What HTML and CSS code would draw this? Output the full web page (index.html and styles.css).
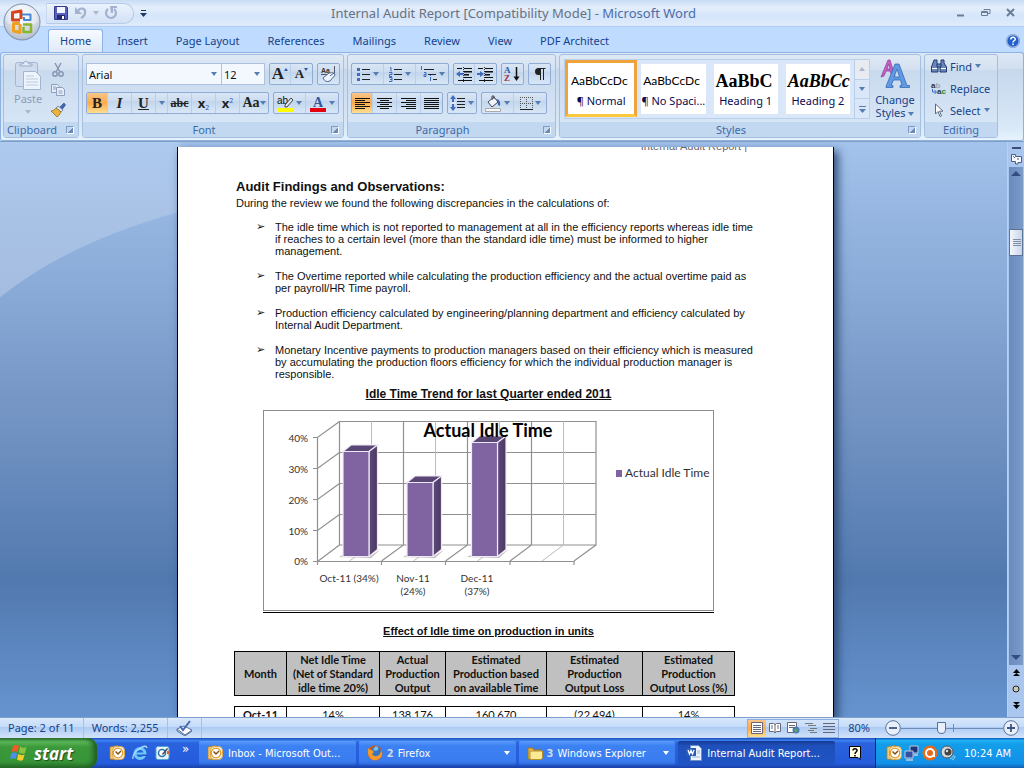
FILE: index.html
```html
<!DOCTYPE html>
<html lang="en">
<head>
<meta charset="utf-8">
<title>Internal Audit Report - Microsoft Word</title>
<link rel="stylesheet" href="styles.css">
</head>
<body>
<header class="titlebar">
  <button class="office" aria-label="Office Button">
    <svg width="38" height="38" viewBox="0 0 38 38"><defs><radialGradient id="orb" cx=".5" cy=".3" r=".75"><stop offset="0" stop-color="#fff"/><stop offset=".55" stop-color="#e3e8f0"/><stop offset="1" stop-color="#9aa7bd"/></radialGradient></defs>
    <circle cx="19" cy="19" r="18" fill="url(#orb)" stroke="#7b8fae"/><path d="M3 20a16 16 0 0 0 32 0q-16 5-32 0z" fill="#c5cddb" opacity=".5"/>
    <g fill="none" stroke-linejoin="round"><path d="M17 17H9.500V9.500L18 8v8" stroke="#d8431c" stroke-width="3"/><path d="M20 12.500v-1h7.500V17H21v-3" stroke="#4a8ad4" stroke-width="2"/><path d="M17 20.500h-6.500V28l6.500 1.500V21" stroke="#f0a01e" stroke-width="3"/><path d="M20 21.500h8V29h-7.500v-5" stroke="#8ab52f" stroke-width="2.500"/></g></svg>
  </button>
  <div class="quick">
    <button aria-label="Save"><svg width="16" height="16" viewBox="0 0 16 16"><path d="M1.500 1.500h12l1 1v12h-13z" fill="#5a5fc0" stroke="#34388c"/><path d="M4 2h8v6H4z" fill="#f2f6ff"/><path d="M4 10h8v4H4z" fill="#222a70"/><path d="M9 11h2v3H9z" fill="#fff"/></svg></button>
    <button aria-label="Undo"><svg width="14" height="16" viewBox="0 0 14 16"><path d="M1 2v7h7z" fill="#a3b3cf"/><path d="M4 6c2-4 8-3 7 2 0 2-2 4-4 5" fill="none" stroke="#a3b3cf" stroke-width="2.200"/></svg></button>
    <i class="caret pale"></i>
    <button aria-label="Redo"><svg width="14" height="16" viewBox="0 0 14 16"><path d="M4 4a5 5 0 1 0 6 0" fill="none" stroke="#a3b3cf" stroke-width="2.200"/><path d="M6 1h7v2H9v5H7z" fill="#a3b3cf"/></svg></button>
  </div>
  <button class="customize" aria-label="Customize Quick Access Toolbar"><svg width="7" height="8"><path d="M1 1.500h5" stroke="#234"/><path d="M0 4h7l-3.500 4z" fill="#1f3860"/></svg></button>
  <h1 class="caption">Internal Audit Report [Compatibility Mode] - <span>Microsoft Word</span></h1>
  <div class="window-buttons">
    <button aria-label="Minimize"><svg width="10" height="10"><path d="M1 7.500h7" stroke="#6a7c96" stroke-width="2"/></svg></button>
    <button aria-label="Restore"><svg width="10" height="10" fill="none" stroke="#6a7c96"><path d="M3 2.500V1.500h6v4h-2"/><path d="M.5 3.500h6v4h-6zM.5 4.500h6"/></svg></button>
    <button aria-label="Close"><svg width="10" height="10"><path d="M1 1l7 7M8 1L1 8" stroke="#6a7c96" stroke-width="2"/></svg></button>
  </div>
</header>
<nav class="tabs">
  <button class="tab active">Home</button><button class="tab">Insert</button><button class="tab">Page Layout</button><button class="tab">References</button><button class="tab">Mailings</button><button class="tab">Review</button><button class="tab">View</button><button class="tab">PDF Architect</button>
  <button class="help" aria-label="Help"><svg width="14" height="14" viewBox="0 0 14 14"><circle cx="7" cy="7" r="6.300" fill="#2460cc" stroke="#e8f0fc"/><circle cx="7" cy="7" r="6.700" fill="none" stroke="#5a7dba" stroke-width=".6"/><path d="M4.800 5.500c0-3 4.500-2.800 4.500-.3C9.300 6.800 7 6.600 7 8.500" fill="none" stroke="#fff" stroke-width="1.500"/><path d="M6.200 9.600h1.600v1.500H6.200z" fill="#fff"/></svg></button>
</nav>
<section class="ribbon" aria-label="Ribbon">
  <section class="group clipboard">
    <div class="body">
      <button class="paste"><svg width="28" height="32" viewBox="0 0 28 32"><rect x="1.500" y="3.500" width="22" height="24" rx="2" fill="#cfdcef" stroke="#a4b5cf"/><path d="M6 5h3q3-6 6 0h3v2H6z" fill="#dfe8f5" stroke="#9bacc6"/><path d="M9.500 12.500h12l5 5v13h-17z" fill="#eef4fc" stroke="#a4b5cf"/><path d="M12 17h8M12 20h12M12 23h12M12 26h12" stroke="#bccbe0"/></svg><span>Paste</span><i class="caret pale"></i></button>
      <div class="stack">
        <button aria-label="Cut"><svg width="14" height="16" viewBox="0 0 14 16" fill="none" stroke="#8797b1" stroke-width="1.500"><path d="M4 1l5 9M10 1L5 10"/><circle cx="4" cy="12" r="2.200"/><circle cx="10" cy="12" r="2.200"/></svg></button>
        <button aria-label="Copy"><svg width="16" height="14" viewBox="0 0 16 14" fill="#e6eef9" stroke="#8d9fbd"><path d="M1.500 1.500h6l2 2v6h-8z"/><path d="M6.500 4.500h6l2 2v6h-8z"/><path d="M3 4h3M3 6h3M8.500 8h4M8.500 10h4"/></svg></button>
        <button aria-label="Format Painter"><svg width="16" height="16" viewBox="0 0 16 16"><path d="M10 5l4-4 1.500 2-3 4z" fill="#4166b8" stroke="#2a4687" stroke-width=".6"/><path d="M8 4l5 4-2 2-5-4z" fill="#dbe2ef" stroke="#5d6c8b" stroke-width=".7"/><path d="M6 6l5 4q-2 4-4 5L1 9q3 0 5-3z" fill="#e9b43c" stroke="#8e671d" stroke-width=".7"/></svg></button>
      </div>
    </div>
    <h2>Clipboard<i class="launcher"></i></h2>
  </section>
  <section class="group font">
    <div class="body rows">
      <div class="row">
        <div class="combos"><label class="combo family"><select aria-label="Font"><option>Arial</option></select></label><label class="combo size"><select aria-label="Font Size"><option>12</option></select></label></div>
        <div class="set"><button class="b22 serif big" aria-label="Grow Font">A<sup class="up"></sup></button><button class="b22 serif small" aria-label="Shrink Font">A<sup class="down"></sup></button></div>
        <div class="set"><button class="b22" aria-label="Clear Formatting"><svg width="17" height="17" viewBox="0 0 17 17"><text x="1" y="7" class="tiny">Aa</text><path d="M14.500 0v9M1 8.500h6" stroke="#556"/><path d="M3 12l6-5q6-1 6 2l-5 6q-5 2-7-3z" fill="#eef4fd" stroke="#54698e"/><path d="M10 10l4-3" stroke="#54698e"/></svg></button></div>
      </div>
      <div class="row">
        <div class="set"><button class="b22 serif on"><b>B</b></button><button class="b24 serif"><i>I</i></button><button class="b24 serif"><u>U</u></button><button class="b12" aria-label="Underline style"><i class="caret"></i></button><button class="b24 serif strike"><s>abc</s></button><button class="b24 script"><b>x</b><sub>2</sub></button><button class="b24 script"><b>x</b><sup>2</sup></button><button class="b28 serif case">Aa<i class="caret"></i></button></div>
        <div class="set"><button class="b32" aria-label="Text Highlight Color"><svg width="17" height="17" viewBox="0 0 17 17"><path d="M0 13h16v4H0z" fill="#ff0"/><text x="0" y="9" class="ab">ab</text><path d="M16 5l-6 7H8v-2l6-7z" fill="#dfe8f5" stroke="#444"/></svg><i class="caret"></i></button><button class="b32" aria-label="Font Color"><svg width="17" height="17" viewBox="0 0 17 17"><text x="3" y="12" class="fc">A</text><path d="M0 13h16v4H0z" fill="#e3000f"/></svg><i class="caret"></i></button></div>
      </div>
    </div>
    <h2>Font<i class="launcher"></i></h2>
  </section>
  <section class="group paragraph">
    <div class="body rows">
      <div class="row">
        <div class="set"><button class="b32" aria-label="Bullets"><svg width="15" height="15" viewBox="0 0 15 15"><path d="M6 2.500h8M6 7.500h8M6 12.500h8" stroke="#222" /><path d="M1 1h3v3H1zM1 6h3v3H1zM1 11h3v3H1z" fill="#416bbd"/></svg><i class="caret"></i></button><button class="b32" aria-label="Numbering"><svg width="15" height="15" viewBox="0 0 15 15"><path d="M6 2.500h8M6 7.500h8M6 12.500h8" stroke="#222"/><path d="M2 .5h1v4M1 5.500h3v2H1.500v2H4M1 10.500h3v4H1M2 12.500h2" fill="none" stroke="#416bbd"/></svg><i class="caret"></i></button><button class="b32" aria-label="Multilevel List"><svg width="17" height="16" viewBox="0 0 17 16"><path d="M4 3.500h10M8 8.500h8M13 13.500h4" stroke="#222"/><path d="M1.500 0v4M4 6.500h2v4H4v-2h2M10.500 11v4M10.500 9v1" fill="none" stroke="#416bbd"/></svg><i class="caret"></i></button></div>
        <div class="set"><button class="b22" aria-label="Decrease Indent"><svg width="17" height="15" viewBox="0 0 17 15"><path d="M1 1.500h5M8 1.500h8M8 4.500h8M8 7.500h5M8 10.500h8M2 13.500h14" stroke="#111"/><path d="M8 4h8v1.500H8zM8 7h5v1.500H8z" fill="#111"/><path d="M0 7l4-3v2h3v2H4v2z" fill="#416bbd"/><path d="M7.500 0v15" stroke="#333" stroke-dasharray="1 1"/></svg></button><button class="b22" aria-label="Increase Indent"><svg width="17" height="15" viewBox="0 0 17 15"><path d="M1 1.500h5M8 1.500h8M8 4.500h8M8 7.500h5M8 10.500h8M2 13.500h14" stroke="#111"/><path d="M8 4h8v1.500H8zM8 7h5v1.500H8z" fill="#111"/><path d="M7 7L3 4v2H0v2h3v2z" fill="#416bbd"/><path d="M7.500 0v15" stroke="#333" stroke-dasharray="1 1"/></svg></button></div>
        <div class="set"><button class="b22" aria-label="Sort"><svg width="17" height="18" viewBox="0 0 17 18"><text x="0" y="8" class="sort">A</text><text x="0" y="16" class="sort z">Z</text><path d="M12.500 2v12" stroke="#111" stroke-width="1.500"/><path d="M9.500 11.500h6L12.500 16z" fill="#111"/></svg></button></div>
        <div class="set"><button class="b22" aria-label="Show paragraph marks"><svg width="12" height="14" viewBox="0 0 12 14"><path d="M6 1H4.500a3.500 3.500 0 0 0 0 7H6z" fill="#222"/><path d="M6.500 1v12M9.500 1v12M4 1.500h7.500" stroke="#222"/></svg></button></div>
      </div>
      <div class="row">
        <div class="set"><button class="b22 on" aria-label="Align Left"><svg width="15" height="13" stroke="#111"><path d="M0 1.500h15M0 3.500h10M0 5.500h15M0 7.500h10M0 9.500h15M0 11.500h10"/></svg></button><button class="b24" aria-label="Center"><svg width="15" height="13" stroke="#111"><path d="M0 1.500h15M3 3.500h9M0 5.500h15M3 7.500h9M0 9.500h15M3 11.500h9"/></svg></button><button class="b24" aria-label="Align Right"><svg width="15" height="13" stroke="#111"><path d="M0 1.500h15M5 3.500h10M0 5.500h15M5 7.500h10M0 9.500h15M5 11.500h10"/></svg></button><button class="b22" aria-label="Justify"><svg width="15" height="13" stroke="#111"><path d="M0 1.500h15M0 3.500h15M0 5.500h15M0 7.500h15M0 9.500h15M0 11.500h15"/></svg></button></div>
        <div class="set"><button class="b28" aria-label="Line Spacing"><svg width="16" height="16" viewBox="0 0 16 16"><path d="M7 3.500h8M7 6.500h8M7 9.500h8M7 12.500h8" stroke="#222"/><path d="M3 0l3 4H4v8h2l-3 4-3-4h2V4H0z" fill="#416bbd"/><path d="M0 7h6v2H0z" fill="#dce9f9"/></svg><i class="caret"></i></button></div>
        <div class="set"><button class="b32" aria-label="Shading"><svg width="17" height="17" viewBox="0 0 17 17"><path d="M3 7l6-5 4 5-6 5z" fill="#f2f6fc" stroke="#445"/><path d="M7 5V1h2v3" fill="none" stroke="#445"/><path d="M11 4q5 0 4 7-3-1-2-4z" fill="#3d63af"/><path d="M.5 13.500h15v3H.5z" fill="#f5f8fd" stroke="#aaa"/></svg><i class="caret"></i></button><button class="b32" aria-label="Borders"><svg width="13" height="13" viewBox="0 0 13 13"><path d="M.5 0v12M6.500 0v12M12.500 0v12M0 .5h12M0 6.500h12" stroke="#555" stroke-dasharray="1 1"/><path d="M0 12.500h13" stroke="#222"/></svg><i class="caret"></i></button></div>
      </div>
    </div>
    <h2>Paragraph<i class="launcher"></i></h2>
  </section>
  <section class="group styles">
    <div class="body">
      <div class="gallery">
        <button class="style chosen"><span class="sample sans">AaBbCcDc</span><span>¶ Normal</span></button>
        <button class="style"><span class="sample sans">AaBbCcDc</span><span>¶ No Spaci...</span></button>
        <button class="style"><span class="sample head">AaBbC</span><span>Heading 1</span></button>
        <button class="style"><span class="sample head slanted">AaBbCc</span><span>Heading 2</span></button>
        <div class="spin"><button class="dim" aria-label="Up"><i class="caret flip pale"></i></button><button aria-label="Down"><i class="caret"></i></button><button aria-label="More"><svg width="7" height="8"><path d="M0 1.500h7" stroke="#567db1"/><path d="M0 4h7L3.500 8z" fill="#567db1"/></svg></button></div>
      </div>
      <button class="change"><svg width="30" height="30" viewBox="0 0 30 30"><path d="M1 18L8 1h2l5 16h-3l-2-5H6l-2 5zM7 10h3L8.500 5z" fill="#c45fc6" stroke="#8c3b93" stroke-width=".7"/><path d="M6 27.500L15 5h4l8 21.500h2.500v2H20v-2h2L20.500 21h-7L11 26.500h2v2H6zM14 18h5.500L17 10z" fill="#5f9ae6" stroke="#315fa9" stroke-width=".7"/></svg><span>Change</span><span>Styles <i class="caret"></i></span></button>
    </div>
    <h2>Styles<i class="launcher"></i></h2>
  </section>
  <section class="group editing">
    <div class="body">
      <button><svg width="16" height="14" viewBox="0 0 16 14" fill="#6a87bd" stroke="#223a6e"><path d="M3 1h3v3l1 2v7H.500V8z"/><path d="M10 1h3v3l2.500 4v5H9V6l1-2z"/><path d="M6 5h4v3H6z"/><path d="M1 9.500h5M10 9.500h5" stroke="#fff"/></svg>Find <i class="caret"></i></button>
      <button><svg width="16" height="14" viewBox="0 0 16 14"><text x="0" y="7" class="rep">a<tspan fill="#9aa6b8">b</tspan></text><text x="6" y="13" class="rep">a<tspan fill="#168a23">c</tspan></text><path d="M1.500 8v3H5M3.500 9l2 2-2 2" fill="none" stroke="#416bbd"/></svg>Replace</button>
      <button><svg width="16" height="14" viewBox="0 0 16 14"><path d="M4.500 1v10l2.500-2.500 2 5 1.500-.8-2-4.500H12z" fill="#fff" stroke="#5b6c88"/></svg>Select <i class="caret"></i></button>
    </div>
    <h2>Editing</h2>
  </section>
</section>
<main class="workspace">
  <div class="canvas">
    <svg class="swoosh" viewBox="0 0 180 578" preserveAspectRatio="none" aria-hidden="true"><defs><linearGradient id="sw" x1="0" y1="0" x2="0" y2="1"><stop offset="0" stop-color="#fff" stop-opacity=".12"/><stop offset="1" stop-color="#fff" stop-opacity=".24"/></linearGradient></defs><path d="M0 0H180V70Q70 100 0 156z" fill="url(#sw)"/></svg>
    <article class="page">
      <div class="running">Internal Audit Report&nbsp;|</div>
      <h2 class="lead">Audit Findings and Observations:</h2>
      <p>During the review we found the following discrepancies in the calculations of:</p>
      <ul class="findings">
        <li>The idle time which is not reported to management at all in the efficiency reports whereas idle time<br>if reaches to a certain level (more than the standard idle time) must be informed to higher<br>management.</li>
        <li>The Overtime reported while calculating the production efficiency and the actual overtime paid as<br>per payroll/HR Time payroll.</li>
        <li>Production efficiency calculated by engineering/planning department and efficiency calculated by<br>Internal Audit Department.</li>
        <li>Monetary Incentive payments to production managers based on their efficiency which is measured<br>by accumulating the production floors efficiency for which the individual production manager is<br>responsible.</li>
      </ul>
      <h3 class="trend">Idle Time Trend for last Quarter ended 2011</h3>
      <figure class="chart">
        <svg viewBox="263 410 451 201" role="img" aria-label="Actual Idle Time by month">
          <defs><linearGradient id="side" x1="0" x2="1"><stop offset="0" stop-color="#5f4a7c"/><stop offset="1" stop-color="#4a3861"/></linearGradient></defs>
          <rect x="263.500" y="410.500" width="450" height="200" fill="#fff" stroke="#8c8c8c"/>
          <g fill="none" stroke="#909090" stroke-width="1.200">
            <path d="M339.500 545V421.500H596V545H339.500M339.500 452.500H596M339.500 483.500H596M339.500 514.500H596M403.500 421V545L381.500 561M467.500 421V545L445.500 561M531.500 421V545L510 561M596 545L574 561"/>
            <path d="M371.500 421V545L349.500 561M435.500 421V545L413.500 561M499.500 421V545L477.500 561M563.500 421V545L542 561" stroke="#bcbcbc" stroke-width="1"/>
            <path d="M317.500 437V565M313 437.500H317.500L339.500 421.500M313 468.500H317.500L339.500 452.500M313 499.500H317.500L339.500 483.500M313 530.500H317.500L339.500 514.500M313 561.500H574M317.500 561.500L339.500 545M381.500 561V565M445.500 561V565M510 561V565M574 561V565"/>
          </g>
          <g fill="#999" opacity=".6"><path d="M339 557l4-2 26 2 12-8-10 9z"/><path d="M403 557l4-2 26 2 12-8-10 9z"/><path d="M467 557l4-2 26 2 12-8-10 9z"/></g>
          <g stroke="#eee9f4" stroke-width="1.200" stroke-linejoin="round">
            <path d="M343 451.500l8-6.500h27l-9 6.500z" fill="#5b4776"/><path d="M369 451.500l8.500-6.500V549.500l-8.500 7z" fill="url(#side)"/><path d="M343 451.500h26v105h-26z" fill="#8064a2"/>
            <path d="M407 482.500l8-6.500h27l-9 6.500z" fill="#5b4776"/><path d="M433 482.500l8.500-6.500V549.500l-8.500 7z" fill="url(#side)"/><path d="M407 482.500h26v74h-26z" fill="#8064a2"/>
            <path d="M471.500 442.500l8-6.500h27l-9 6.500z" fill="#5b4776"/><path d="M497.500 442.500l8.500-6.500V549.500l-8.500 7z" fill="url(#side)"/><path d="M471.500 442.500h26v114h-26z" fill="#8064a2"/>
          </g>
          <text x="488" y="437" class="ctitle">Actual Idle Time</text>
          <g class="ylab"><text x="308" y="442">40%</text><text x="308" y="473">30%</text><text x="308" y="504">20%</text><text x="308" y="535">10%</text><text x="308" y="565">0%</text></g>
          <g class="xlab"><text x="349" y="582">Oct-11 (34%)</text><text x="413" y="582">Nov-11</text><text x="413" y="595">(24%)</text><text x="477" y="582">Dec-11</text><text x="477" y="595">(37%)</text></g>
          <rect x="616" y="470" width="6" height="7" fill="#8064a2"/><text x="625" y="477" class="leg">Actual Idle Time</text>
        </svg>
      </figure>
      <h3 class="effect">Effect of Idle time on production in units</h3>
      <table>
        <colgroup><col class="c1"><col class="c2"><col class="c3"><col class="c4"><col class="c5"><col class="c6"></colgroup>
        <thead><tr><th>Month</th><th>Net Idle Time<br>(Net of Standard<br>idle time 20%)</th><th>Actual<br>Production<br>Output</th><th>Estimated<br>Production based<br>on available Time</th><th>Estimated<br>Production<br>Output Loss</th><th>Estimated<br>Production<br>Output Loss (%)</th></tr></thead>
        <tbody><tr class="spacer"><td colspan="6"></td></tr><tr><th>Oct-11</th><td>14%</td><td>138,176</td><td>160,670</td><td>(22,494)</td><td>14%</td></tr></tbody>
      </table>
    </article>
  </div>
  <aside class="scroll" aria-label="Vertical scroll bar">
    <i class="split"></i>
    <button aria-label="View Ruler"><svg width="13" height="12" viewBox="0 0 13 12" fill="#f6f9fe" stroke="#4f5f7f"><path d="M1.500 1.500h4v2h6v6H8v1.500H5.500V8.500h-4z"/><path d="M3 3l2 2M8 5v2" /></svg></button>
    <div class="track"><button aria-label="Scroll up"><i class="arrow up"></i></button><span class="thumb"></span><button class="last" aria-label="Scroll down"><i class="arrow"></i></button></div>
    <button class="nav" aria-label="Previous Page"><svg width="7" height="8"><path d="M0 4l3.500-4L7 4zM0 7l3.500-3L7 7z"/></svg></button>
    <button class="nav" aria-label="Browse Object"><svg width="8" height="8"><circle cx="4" cy="4" r="3" fill="#c9cbb8" stroke="#222"/></svg></button>
    <button class="nav" aria-label="Next Page"><svg width="7" height="8"><path d="M0 1l3.500 3L7 1zM0 4l3.500 4L7 4z"/></svg></button>
  </aside>
</main>
<footer class="status">
  <span class="cell">Page: 2 of 11</span><span class="cell">Words: 2,255</span>
  <span class="cell"><svg width="17" height="16" viewBox="0 0 17 16"><path d="M1 9l7-3 8 4-7 5z" fill="#fff" stroke="#57709f"/><path d="M1 9v2l8 5 7-5" fill="none" stroke="#57709f"/><path d="M4 6l3 4 7-9" fill="none" stroke="#456bb5" stroke-width="2"/></svg></span>
  <div class="views"><button class="on" aria-label="Print Layout"><svg width="12" height="12"><path d="M.5.5h11v11H.5z" fill="#fff" stroke="#667"/><path d="M2 3.500h8M2 5.500h8M2 7.500h8M2 9.500h8" stroke="#667"/></svg></button><button aria-label="Full Screen Reading"><svg width="12" height="12" fill="#fff" stroke="#667"><path d="M.5 1.500h4l1.500 1 1.500-1h4v8h-4L6 11 4.500 9.500h-4zM6 2v9M2 4h2M2 6h2M8 4h2M8 6h2"/></svg></button><button aria-label="Web Layout"><svg width="13" height="12"><path d="M.5.5h9v10h-9z" fill="#fff" stroke="#667"/><path d="M2 3.500h6M2 5.500h6" stroke="#667"/><circle cx="9" cy="8" r="3.500" fill="#4b79b8"/><path d="M7 8q2-3 4 0-2 2-2 3z" fill="#59a75d"/></svg></button><button aria-label="Outline"><svg width="12" height="12" stroke="#777"><path d="M0 1.500h8M3 3.500h8M5 6.500h7M3 8.500h6M5 10.500h7"/></svg></button><button aria-label="Draft"><svg width="12" height="12" stroke="#667"><path d="M0 1.500h12M0 4.500h12M0 7.500h12M0 10.500h12"/></svg></button></div>
  <button class="percent">80%</button>
  <button aria-label="Zoom Out"><svg width="16" height="16" viewBox="0 0 16 16"><circle cx="8" cy="8" r="7.300" fill="#e8effa" stroke="#59739d"/><path d="M4 8h8" stroke="#3d5680" stroke-width="1.800"/></svg></button>
  <input class="zoom" type="range" min="0" max="100" value="39" aria-label="Zoom">
  <button aria-label="Zoom In"><svg width="16" height="16" viewBox="0 0 16 16"><circle cx="8" cy="8" r="7.300" fill="#e8effa" stroke="#59739d"/><path d="M4 8h8M8 4v8" stroke="#3d5680" stroke-width="1.800"/></svg></button>
</footer>
<svg class="defs" width="0" height="0" aria-hidden="true"><symbol id="outlook" viewBox="0 0 16 16"><path d="M1 2l8-1.500V15L1 14z" fill="#f3c66f" stroke="#b47a21" stroke-width=".7"/><rect x="3.500" y="1.500" width="12" height="13" rx="4" fill="#fbf3dc" stroke="#d9a84b"/><circle cx="9" cy="8" r="4.800" fill="#fff" stroke="#e09a2b" stroke-width="1.300"/><path d="M6.500 6.500L9 9l3-3" fill="none" stroke="#80500f" stroke-width="1.500"/></symbol></svg>
<footer class="taskbar">
  <button class="start"><svg width="18" height="18" viewBox="0 0 18 18"><path d="M3 2q3-2 6 0L7.500 8q-3-1.500-6 0z" fill="#ef5b2a"/><path d="M10 2.500q3 2 6.500.5L15 9q-3 1.500-6.200-.5z" fill="#86c440"/><path d="M1.200 9.500q3-2 6 0L5.700 15q-3-1.500-5.700 0z" fill="#4a8ff0"/><path d="M8.300 10q3 2 6.300.5L13 16q-3 1.500-6-.5z" fill="#f8c92c"/></svg>start</button>
  <div class="launch">
    <button aria-label="Outlook"><svg width="16" height="16"><use href="#outlook"/></svg></button>
    <button aria-label="Internet Explorer"><svg width="16" height="16" viewBox="0 0 16 16"><circle cx="8" cy="8.500" r="5" fill="none" stroke="#6fc8f7" stroke-width="3"/><path d="M4 8.500h9" stroke="#6fc8f7" stroke-width="2"/><path d="M10 11h5v-1.500h-4z" fill="#1f55c8"/><path d="M1 14Q0 9 7 4t8-1" fill="none" stroke="#a7defb" stroke-width="1.300"/></svg></button>
    <button aria-label="Show Desktop"><svg width="16" height="16" viewBox="0 0 16 16"><rect x="1" y="1.500" width="13" height="13" rx="2" fill="#e7f3fb" stroke="#5aa5d0"/><circle cx="7" cy="8" r="3.500" fill="#fff" stroke="#34789f" stroke-width="1.500"/><path d="M7 9l5-6 1 1-5 6z" fill="#345"/><path d="M12 6h3v3h-3z" fill="#e85b22"/></svg></button>
    <span class="more">»</span>
  </div>
  <div class="tasks">
    <button><svg width="16" height="16"><use href="#outlook"/></svg><span>Inbox - Microsoft Out...</span></button>
    <button class="many"><svg width="16" height="16" viewBox="0 0 16 16"><circle cx="8" cy="8" r="7.500" fill="#d9560f"/><circle cx="9" cy="6.500" r="5" fill="#3576be"/><path d="M9 1q3 1 2 4l-3 1-2-2z" fill="#7cc0ea"/><path d="M1 3q1 2 4 2l2 2-2 2q2 3 5 2 4-1 4-6 3 6-2 9-5 3-9-1-3-4-2-8z" fill="#f29a2e"/></svg><b>2</b><span>Firefox</span><i class="caret"></i></button>
    <button class="many"><svg width="16" height="16" viewBox="0 0 16 16"><path d="M1 3h5l1 2h7v9H1z" fill="#e3b64c" stroke="#9b7722"/><path d="M3 6h12.500v7l-1.500 1.500H3z" fill="#fbe994" stroke="#b6912f"/></svg><b>3</b><span>Windows Explorer</span><i class="caret"></i></button>
    <button class="current"><svg width="16" height="16" viewBox="0 0 16 16"><path d="M4.500.5h8l3 3v12h-11z" fill="#eef4ff" stroke="#6d8cc6"/><path d="M11 6h3M11 8h3M6 12h8" stroke="#9cb4dd"/><rect x="0" y="3" width="10" height="8" fill="#2b5bb5"/><path d="M2 5l1.500 4L5 5.500 6.500 9 8 5" fill="none" stroke="#fff" stroke-width="1.300"/></svg><span>Internal Audit Report...</span></button>
  </div>
  <button class="hint" aria-label="Language help"><svg width="12" height="14" viewBox="0 0 12 14"><path d="M.5.500h11v11H11v2L9 11.500H.500z" fill="#ffffe1" stroke="#000"/><path d="M4 4.500c0-2.500 4-2.500 4 0C8 6 6 6 6 8" fill="none" stroke="#000" stroke-width="1.500"/><path d="M5.200 9h1.600v1.500H5.200z"/></svg></button>
  <div class="tray">
    <svg width="16" height="16"><use href="#outlook"/></svg>
    <svg width="16" height="16" viewBox="0 0 16 16"><path d="M6 1h8v7H6z" fill="#20347c" stroke="#c0cbe0"/><path d="M1 6h8v7H1z" fill="#3350a5" stroke="#c0cbe0"/><path d="M2 15h7M10 10h4" stroke="#c0cbe0" stroke-width="1.500"/></svg>
    <svg width="16" height="16" viewBox="0 0 16 16"><circle cx="8" cy="8" r="7.500" fill="#e56a19"/><circle cx="8" cy="8" r="4" fill="none" stroke="#fff" stroke-width="2"/><path d="M12 6v6" stroke="#fff" stroke-width="2"/></svg>
    <svg width="16" height="16" viewBox="0 0 16 16"><circle cx="7" cy="7" r="6" fill="#d4d8dc" stroke="#555"/><circle cx="8" cy="7" r="3.500" fill="#444"/><circle cx="7" cy="6" r="1.200" fill="#ddd"/><path d="M10 14q3-1 4-4M12 15q3-1 3-4" fill="none" stroke="#8ed5f7"/></svg>
    <time>10:24 AM</time>
  </div>
</footer>
</body>
</html>
```
FILE: styles.css
```css
* { box-sizing: border-box; }
body { margin: 0; height: 100vh; display: flex; flex-direction: column; overflow: hidden; background: #bfdbff; font-family: "Noto Sans", "Open Sans", sans-serif; font-size: 11px; color: #15428b; }
button { border: 0; margin: 0; padding: 0; background: none; font: inherit; color: inherit; display: flex; align-items: center; justify-content: center; flex: none; white-space: nowrap; }
svg { display: block; flex: none; }
h1, h2, h3, p, ul, figure { margin: 0; padding: 0; font-weight: normal; }
.defs { position: absolute; }

.caret { flex: none; display: inline-block; vertical-align: middle; border: 3px solid transparent; border-top: 4px solid #567db1; border-bottom: 0; }
.caret.pale { border-top-color: #a9b8cf; }
.caret.flip { transform: rotate(180deg); }

/* title bar */
.titlebar { flex: none; height: 27px; display: flex; align-items: center; position: relative; padding: 0 8px 0 46px; background: linear-gradient(#c9dcf5, #e4eefb 30%, #d5e5fa 60%, #dfebfb); border-bottom: 1px solid #b0cdf3; }
.office { position: absolute; left: 3px; top: 3px; z-index: 2; }
.quick { display: flex; align-items: center; gap: 5px; height: 21px; width: 88px; padding-left: 6px; border: 1px solid #b6cbe8; border-left-color: #c8d9f0; border-radius: 0 10px 10px 0; background: linear-gradient(#eaf2fd, #d3e2f6); }
.customize { margin-left: 6px; }
.caption { flex: 1; text-align: center; font-size: 13px; line-height: 27px; color: #69727f; padding-right: 76px; white-space: nowrap; }
.caption span { color: #4e6ca8; }
.window-buttons { display: flex; gap: 15px; }

/* tabs */
.tabs { flex: none; height: 25px; display: flex; padding: 2px 4px 0 48px; }
.tab { height: 23px; padding: 0 14px; line-height: 20px; }
.tab.active { padding: 0 11px; border: 1px solid #8db2e3; border-bottom: 0; border-radius: 3px 3px 0 0; background: linear-gradient(#f7faff, #dfeaf7); }
.help { margin-left: auto; align-self: center; }

/* ribbon */
.ribbon { flex: none; height: 89px; display: flex; gap: 3px; padding: 1px 4px 2px 2px; border: 1px solid #8db2e3; border-bottom-color: #8fb3dc; border-radius: 3px; background: linear-gradient(#dde8f5, #d1dff0 18%, #c7d8ed 19%, #d8e8f8 85%, #e6f3fd); }
.group { display: flex; flex-direction: column; min-width: 0; border: 1px solid #a5bfdf; border-radius: 3px; background: linear-gradient(#dfe9f5, #d4e1f1 18%, #c9daee 19%, #dbe9f8); }
.group .body { flex: 1; min-height: 0; }
.group h2 { flex: none; position: relative; height: 15px; background: #c1d8f0; text-align: center; line-height: 15px; font-size: 11px; color: #3e6aaa; }
.font h2, .paragraph h2, .styles h2 { padding-right: 18px; }
.launcher { position: absolute; right: 4px; top: 4px; width: 8px; height: 8px; border: 1px solid #7f9cc5; border-right-color: #fff; border-bottom-color: #fff; background: linear-gradient(135deg, transparent 55%, #6c8ab5 55%); }
.clipboard { flex: 0 0 76px; }
.clipboard h2 { text-align: left; padding-left: 3px; }
.font { flex: 0 0 262px; }
.paragraph { flex: 0 0 209px; }
.styles { flex: 0 0 362px; }
.editing { flex: 0 0 74px; }
.clipboard .body { display: flex; gap: 8px; padding: 4px 0 0 10px; }
.paste { flex-direction: column; justify-content: flex-start; color: #8d9db5; }
.paste span { line-height: 16px; }
.paste .caret { margin-top: 3px; }
.stack { display: flex; flex-direction: column; align-items: center; justify-content: space-around; padding-bottom: 2px; }
.rows { display: flex; flex-direction: column; gap: 7px; padding: 8px 3px 0; }
.row { display: flex; gap: 4px; }
.set { display: flex; height: 22px; border: 1px solid #8facd5; border-radius: 2px; background: linear-gradient(#d9e6f5, #ccdcf0 40%, #c2d5ec 41%, #d8e7f7); }
.set button { border-right: 1px solid #b9cee8; gap: 2px; }
.set button:last-child { border-right: 0; }
.b12 { width: 12px; }
.b22 { width: 21px; }
.b24 { width: 24px; }
.b28 { width: 28px; }
.b32 { width: 32px; }
.on { background: linear-gradient(#f9c58b, #fdab4b 50%, #fddf92); }
.serif { font-family: "Liberation Serif", serif; font-size: 15px; font-weight: bold; color: #222; }
.serif.big { font-size: 17px; }
.serif.small { font-size: 13px; }
.serif.strike { font-size: 12px; }
.serif.case { font-size: 14px; }
.script { font-size: 13px; color: #222; }
.script sub, .script sup { font-size: 7px; line-height: 7px; color: #2757b5; }
.script sub { align-self: flex-end; padding-bottom: 2px; }
.script sup { align-self: flex-start; padding-top: 4px; }
.set .script, .set .case { gap: 0; }
.up, .down { align-self: flex-start; margin-top: 4px; border: 2px solid transparent; border-bottom: 3px solid #315a9e; border-top: 0; }
.down { border-bottom: 0; border-top: 3px solid #315a9e; }
.set .big, .set .small { gap: 0; }
.combos { display: flex; border: 1px solid #abc1de; background: #f3f8fe; height: 22px; }
.combo { position: relative; display: block; }
.combo::after { content: ""; position: absolute; right: 4px; top: 8px; border: 3px solid transparent; border-top: 4px solid #567db1; border-bottom: 0; }
.combo select { appearance: none; width: 100%; height: 20px; border: 0; padding: 0 2px; background: none; font: inherit; color: #111; }
.family { width: 135px; border-right: 1px solid #abc1de; }
.size { width: 42px; }
.tiny { font: bold 7px "Liberation Sans", sans-serif; fill: #333; }
.ab { font: 10px "Liberation Sans", sans-serif; fill: #111; }
.fc { font: bold 14px "Liberation Serif", serif; fill: #34589b; }
.sort { font: bold 9px "Liberation Serif", serif; fill: #2d58ad; }
.sort.z { fill: #a33238; }
.rep { font: bold 8px "Liberation Sans", sans-serif; fill: #333; }
.styles .body { display: flex; gap: 2px; padding: 4px 2px 0 4px; }
.gallery { display: flex; height: 60px; flex: 1; min-width: 0; border: 1px solid #b9d0ed; background: #d9e7f8; }
.style { flex: 1; min-width: 0; flex-direction: column; justify-content: flex-start; margin: 4px; padding-top: 5px; height: 50px; background: #fff; color: #0b0b50; }
.style.chosen { margin: 0; padding: 6px 1px 0; height: 57px; border: 3px solid #f0a33c; border-bottom-color: #fbc93f; }
.sample { align-self: stretch; height: 24px; overflow: hidden; text-align: left; padding: 0 2px; color: #000; }
.style span:last-child { line-height: 16px; }
.sans { font: 12px/24px Lato, "Open Sans", sans-serif; }
.head { font: bold 18px/24px "Liberation Serif", serif; }
.slanted { font-style: italic; }
.spin { flex: none; width: 15px; display: flex; flex-direction: column; border-left: 1px solid #b9d0ed; }
.spin button { flex: 1; border-bottom: 1px solid #b9d0ed; }
.spin button:last-child { border-bottom: 0; }
.spin .dim { background: #e8ebf0; }
.change { width: 46px; flex-direction: column; justify-content: flex-start; line-height: 13px; }
.change svg { margin-bottom: 4px; }
.editing .body { display: flex; flex-direction: column; align-items: flex-start; padding: 0 0 0 6px; }
.editing button { height: 22px; gap: 3px; }

/* document */
.workspace { flex: 1; min-height: 0; display: flex; background: linear-gradient(#a3c3ec, #92b2de 17%, #7697c6 45%, #5279af 76%, #6693cf); border-top: 1px solid #7f9fc6; }
.canvas { flex: 1; position: relative; display: flex; justify-content: center; overflow: hidden; padding: 5px 0 0 4px; }
.swoosh { position: absolute; left: 0; top: 0; width: 180px; height: 100%; }
.page { position: relative; flex: 0 1 657px; overflow: hidden; background: #fff; border: 1px solid #000; border-width: 0 1px; padding: 0 92px 0 58px; box-shadow: 4px 4px 9px #2d4a75; font-family: "Liberation Sans", Arial, sans-serif; font-size: 11px; line-height: 12px; color: #111; white-space: nowrap; }
.running { height: 5px; margin-right: -6px; overflow: hidden; display: flex; align-items: flex-end; justify-content: flex-end; color: #666; }
.lead { font-size: 13px; font-weight: bold; line-height: 16px; margin: 27px 0 2px; }
.findings { list-style: none; display: flex; flex-direction: column; gap: 13px; margin: 12px 0 7px; padding-left: 20px; }
.findings li { position: relative; padding-left: 19px; }
.findings li::before { content: "➢"; position: absolute; left: 0; top: 0; font-family: "DejaVu Sans", sans-serif; font-size: 11px; }
.page h3 { font-weight: bold; text-decoration: underline; text-align: center; }
.trend { font-size: 12px; line-height: 14px; }
.chart { width: 451px; margin: 9px 0 0 27px; border-bottom: 1px solid #000; padding-bottom: 1px; }
.chart svg { width: 100%; height: auto; }
.effect { font-size: 11px; line-height: 14px; margin: 11px 0 13px; }
.ctitle, .ylab, .xlab, .leg { font-family: Lato, "Open Sans", sans-serif; fill: #333; }
.ctitle { font-size: 18px; font-weight: bold; text-anchor: middle; fill: #000; }
.ylab { font-size: 10px; text-anchor: end; }
.xlab { font-size: 10px; text-anchor: middle; }
.leg { font-size: 12px; }
table { border-collapse: collapse; table-layout: fixed; width: 501px; margin-left: -2px; font: 11px/14px Lato, "Open Sans", sans-serif; text-align: center; }
.c1 { width: 52px; } .c2 { width: 93px; } .c3 { width: 66px; } .c4 { width: 101px; } .c5 { width: 96px; } .c6 { width: 92px; }
th, td { padding: 1px 0 0; border: 1px solid #000; }
thead th { background: #c0c0c0; }
.spacer td { height: 11px; padding: 0; border-width: 1px 0; }

.scroll { flex: none; width: 17px; display: flex; flex-direction: column; align-items: center; background: #a9c6ef; padding: 5px 1px 4px; border-left: 1px solid #b7d0f4; }
.split { width: 9px; height: 2px; background: #3a4e77; margin-bottom: 4px; }
.track { flex: 1; align-self: stretch; display: flex; flex-direction: column; align-items: center; margin-top: 2px; background: linear-gradient(90deg, #6a8bbb, #7b9cc9); }
.track button { height: 16px; }
.arrow { border: 5px solid transparent; border-top: 5px solid #344d80; border-bottom: 0; }
.arrow.up { border: 5px solid transparent; border-bottom: 5px solid #344d80; border-top: 0; }
.thumb { width: 14px; height: 27px; margin-top: 46px; border: 1px solid #5c7398; background: repeating-linear-gradient(#8090a8 0 1px, transparent 1px 2px) 3px 9px / 8px 7px no-repeat, linear-gradient(90deg, #f4f7fc, #c9d5e8); }
.track .last { margin-top: auto; }
.nav { height: 16px; }

/* status bar */
.status { flex: none; height: 21px; display: flex; align-items: center; padding-right: 5px; background: linear-gradient(#d9e8fb, #c4dbf9 45%, #adcbf3 46%, #d2e3fa); border-top: 1px solid #7fa0cc; line-height: 20px; }
.cell { padding: 0 8px; height: 20px; display: flex; align-items: center; border-right: 1px solid #a3c0e8; }
.views { margin-left: auto; display: flex; border: 1px solid #8fb0dc; height: 19px; }
.views button { width: 18px; }
.percent { margin: 0 15px 0 9px; }
.zoom { appearance: none; width: 102px; height: 16px; margin: 0; background: linear-gradient(#6f8cb8, #6f8cb8) center / 100% 1px no-repeat, linear-gradient(#6f8cb8, #6f8cb8) 52px center / 1px 8px no-repeat; }
.zoom::-webkit-slider-thumb { appearance: none; width: 9px; height: 12px; border: 1px solid #54709f; border-radius: 1px 1px 5px 5px; background: #e8effa; }

/* taskbar */
.taskbar { flex: none; height: 30px; display: flex; align-items: center; color: #fff; font-family: "DejaVu Sans Condensed", "DejaVu Sans", sans-serif; font-size: 11px; background: linear-gradient(#1f4bb5, #3a80f0 8%, #2a62de 18%, #245bdb 85%, #1941a5); }
.start { width: 97px; height: 30px; gap: 6px; padding-right: 14px; border-radius: 0 9px 9px 0; background: linear-gradient(#2f7a2d, #5cb85a 12%, #3c993a 30%, #379437 80%, #256e26); box-shadow: inset -4px 0 5px #235f25; font: italic bold 17px "Open Sans", sans-serif; text-shadow: 1px 1px 1px #244b1f; }
.launch { display: flex; align-items: center; gap: 7px; padding-left: 12px; width: 102px; }
.more { font-size: 13px; margin: -10px 0 0 4px; }
.tasks { flex: 1; display: flex; gap: 3px; min-width: 0; }
.tasks button { flex: 1 1 0; min-width: 0; height: 24px; justify-content: flex-start; gap: 5px; padding: 0 6px 0 8px; border-radius: 2px; background: linear-gradient(#5d9bfb, #3c81f3 20%, #3a7cef 85%, #2c64d0); }
.tasks button.many { gap: 4px; }
.tasks button.current { background: linear-gradient(#163a94, #1e50bc 20%, #2054c4); }
.tasks b { color: #cfd9e8; font-size: 11px; }
.tasks .caret { margin-left: auto; border-top-color: #fff; }
.hint { width: 40px; }
.tray { display: flex; align-items: center; gap: 2px; height: 30px; padding: 0 13px 0 10px; border-left: 1px solid #092e51; background: linear-gradient(#0c59b9, #1fb0f5 8%, #139ee9 20%, #1290e8 85%, #0f5fb0); }
.tray time { margin-left: 6px; }
```
